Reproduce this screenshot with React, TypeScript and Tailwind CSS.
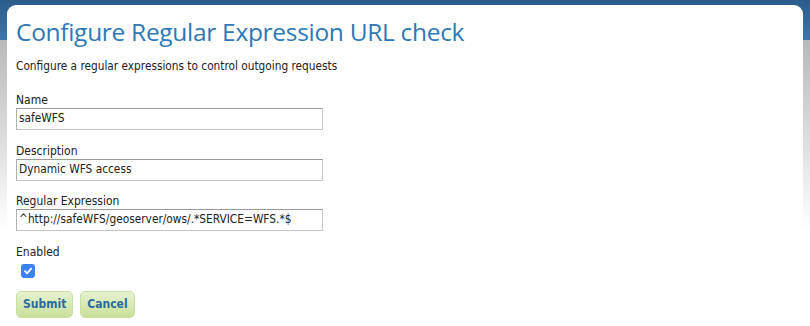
export default function App() {
  const fields = [
    { label: "Name", value: "safeWFS" },
    { label: "Description", value: "Dynamic WFS access" },
    { label: "Regular Expression", value: "^http://safeWFS/geoserver/ows/.*SERVICE=WFS.*$" },
  ];

  return (
    <div className="relative w-[810px] h-[326px] overflow-hidden bg-white font-['DejaVu_Sans_Condensed','DejaVu_Sans',sans-serif]">
      {/* page chrome behind the card */}
      <div className="absolute inset-x-0 top-0 h-[40px] bg-gradient-to-b from-[#2c5d8a] to-[#3b75ab]" />
      <div className="absolute inset-x-0 top-[40px] h-[190px] bg-gradient-to-b from-[#b9b9b9] to-white" />

      <div className="relative mx-[7px] mt-[5px] h-[321px] rounded-t-[9px] bg-white px-[9px] pt-[10px]">
        <h1 className="text-[24.5px] leading-[34px] text-[#2c78b8] font-['Open_Sans',sans-serif] tracking-[-0.3px]">
          Configure Regular Expression URL check
        </h1>
        <p className="mt-[9px] text-[11.75px] leading-[16px] text-[#222]">
          Configure a regular expressions to control outgoing requests
        </p>

        <div className="mt-[19px] flex flex-col">
          {fields.map((f) => (
            <div key={f.label} className="mb-[13.5px] flex flex-col">
              <label className="text-[12px] leading-[14px] text-[#222]">{f.label}</label>
              <div className="mt-[1px] flex h-[22px] w-[307px] items-center border border-[#c4c4c4] border-t-[#9a9a9a] border-l-[#b0b0b0] bg-white px-[2px] text-[11.8px] text-[#222]">
                {f.value}
              </div>
            </div>
          ))}
          <label className="text-[12px] leading-[14px] text-[#222]">Enabled</label>
          <div className="ml-[5px] mt-[5px] flex h-[14px] w-[14px] items-center justify-center rounded-[3px] bg-[#3b82f6]">
            <svg width="10" height="10" viewBox="0 0 10 10">
              <path d="M2 5.2 L4.1 7.3 L8.2 2.6" fill="none" stroke="white" strokeWidth="1.8" strokeLinecap="round" strokeLinejoin="round" />
            </svg>
          </div>
          <div className="mt-[13px] flex gap-[7px]">
            <button className="h-[27px] rounded-[5px] border border-[#c9dfa0] bg-gradient-to-b from-[#e6f2cf] to-[#c9e09a] px-[6px] text-[12px] font-bold text-[#2a6a9e]">
              Submit
            </button>
            <button className="h-[27px] rounded-[5px] border border-[#c9dfa0] bg-gradient-to-b from-[#e6f2cf] to-[#c9e09a] px-[6px] text-[12px] font-bold text-[#2a6a9e]">
              Cancel
            </button>
          </div>
        </div>
      </div>
    </div>
  );
}
